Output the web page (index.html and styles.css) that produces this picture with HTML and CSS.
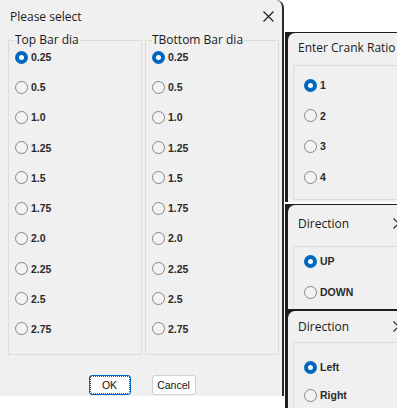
FILE: index.html
```html
<!DOCTYPE html>
<html lang="en">
  <head>
    <meta charset="UTF-8" />
    <title>Please select</title>
    <link rel="stylesheet" href="styles.css">
  </head>
  <body>
    <div class="dialog">
      <div class="titlebar">
        <span class="title">Please select</span>
        <svg class="close" width="11" height="11" viewBox="0 0 11 11">
          <path d="M0.5 0.5 L10.5 10.5 M10.5 0.5 L0.5 10.5" stroke="#1a1a1a" stroke-width="1.1" fill="none" />
        </svg>
      </div>

      <div class="groups">
        <fieldset class="group">
          <legend>Top Bar dia</legend>
          <label class="opt"><span class="dot on"></span>0.25</label>
          <label class="opt"><span class="dot"></span>0.5</label>
          <label class="opt"><span class="dot"></span>1.0</label>
          <label class="opt"><span class="dot"></span>1.25</label>
          <label class="opt"><span class="dot"></span>1.5</label>
          <label class="opt"><span class="dot"></span>1.75</label>
          <label class="opt"><span class="dot"></span>2.0</label>
          <label class="opt"><span class="dot"></span>2.25</label>
          <label class="opt"><span class="dot"></span>2.5</label>
          <label class="opt"><span class="dot"></span>2.75</label>
        </fieldset>
        <fieldset class="group">
          <legend>TBottom Bar dia</legend>
          <label class="opt"><span class="dot on"></span>0.25</label>
          <label class="opt"><span class="dot"></span>0.5</label>
          <label class="opt"><span class="dot"></span>1.0</label>
          <label class="opt"><span class="dot"></span>1.25</label>
          <label class="opt"><span class="dot"></span>1.5</label>
          <label class="opt"><span class="dot"></span>1.75</label>
          <label class="opt"><span class="dot"></span>2.0</label>
          <label class="opt"><span class="dot"></span>2.25</label>
          <label class="opt"><span class="dot"></span>2.5</label>
          <label class="opt"><span class="dot"></span>2.75</label>
        </fieldset>
      </div>

      <div class="buttons">
        <button class="btn btn-ok"><span>OK</span></button>
        <button class="btn btn-cancel">Cancel</button>
      </div>
    </div>

    <div class="side">
      <!-- Fenêtre ratio -->
      <div class="win win-crank">
        <div class="win-inner">
          <div class="win-title">Enter Crank Ratio</div>
          <div class="box box-crank">
            <label class="opt"><span class="dot on"></span>1</label>
            <label class="opt"><span class="dot"></span>2</label>
            <label class="opt"><span class="dot"></span>3</label>
            <label class="opt"><span class="dot"></span>4</label>
          </div>
        </div>
      </div>

      <!-- Direction haut / bas -->
      <div class="win win-dir1">
        <div class="win-inner">
          <div class="win-title">
            <span>Direction</span>
            <svg width="11" height="11" viewBox="0 0 11 11">
              <path d="M0.5 0.5 L10.5 10.5 M10.5 0.5 L0.5 10.5" stroke="#1a1a1a" stroke-width="1.1" fill="none" />
            </svg>
          </div>
          <div class="box box-dir1">
            <label class="opt"><span class="dot on"></span>UP</label>
            <label class="opt"><span class="dot"></span>DOWN</label>
          </div>
        </div>
      </div>

      <!-- Direction gauche / droite -->
      <div class="win win-dir2">
        <div class="win-inner">
          <div class="win-title">
            <span>Direction</span>
            <svg width="11" height="11" viewBox="0 0 11 11">
              <path d="M0.5 0.5 L10.5 10.5 M10.5 0.5 L0.5 10.5" stroke="#1a1a1a" stroke-width="1.1" fill="none" />
            </svg>
          </div>
          <div class="box box-dir2">
            <label class="opt"><span class="dot on"></span>Left</label>
            <label class="opt"><span class="dot"></span>Right</label>
          </div>
        </div>
      </div>
    </div>
  </body>
</html>
```

FILE: styles.css
```css
:root {
  --face: #f0f0f0;
  --line: #dcdcdc;
  --accent: #0067c0;
  --frame: #1e1e1e;
  --text: #1a1a1a;
}

* {
  box-sizing: border-box;
  margin: 0;
  padding: 0;
}

body {
  width: 397px;
  height: 408px;
  overflow: hidden;
  display: flex;
  align-items: flex-start;
  background: #fff;
  font-family: "Open Sans", "Noto Sans", sans-serif;
  color: var(--text);
}

/* Fenêtre principale */
.dialog {
  width: 284px;
  height: 396px;
  flex-shrink: 0;
  background: var(--face);
  border-right: 2px solid #2b2b2b;
  border-top-right-radius: 8px;
}

.titlebar {
  height: 32px;
  display: flex;
  align-items: center;
  justify-content: space-between;
  padding: 0 8px 0 10px;
}

.title {
  font-size: 12px;
}

.groups {
  display: grid;
  grid-template-columns: 134px 134px;
  column-gap: 3px;
  padding-left: 8px;
}

.group {
  border: 1px solid var(--line);
  padding: 0 6px 16px 6px;
  display: flex;
  flex-direction: column;
  gap: 12.22px;
}

.group legend {
  font-size: 12px;
  line-height: 16px;
  padding: 0 1px 0 0;
}

.opt {
  height: 18px;
  display: flex;
  align-items: center;
  gap: 3px;
  font-family: "Liberation Sans", Arial, sans-serif;
  font-size: 10.5px;
  font-weight: 700;
  color: #2a2a2a;
}

.dot {
  width: 13px;
  height: 13px;
  border-radius: 50%;
  border: 1px solid #858585;
  background: #f3f3f3;
  flex-shrink: 0;
}

.dot.on {
  border: 4px solid var(--accent);
  background: #fff;
}

.buttons {
  display: flex;
  justify-content: center;
  gap: 21px;
  margin-top: 20px;
  padding-left: 2px;
}

.btn {
  height: 20px;
  border-radius: 3px;
  background: #fdfdfd;
  font-family: "Liberation Sans", Arial, sans-serif;
  font-size: 10.5px;
  color: #111;
}

.btn-ok {
  width: 42px;
  border: 1px solid var(--accent);
  padding: 1px;
}

.btn-ok span {
  display: flex;
  align-items: center;
  justify-content: center;
  height: 100%;
  outline: 1px dotted #555;
}

.btn-cancel {
  width: 44px;
  border: 1px solid #d0d0d0;
}

/* Petites fenêtres à droite */
.side {
  width: 112px;
  height: 408px;
  margin-left: 1px;
  padding-top: 32px;
  overflow: hidden;
  display: flex;
  flex-direction: column;
}

.win {
  background: var(--frame);
  padding: 1px 0 0 3px;
  flex-shrink: 0;
}

.win-inner {
  width: 126px;
  height: 100%;
  background: var(--face);
  border-top-left-radius: 7px;
  padding-left: 5px;
}

.win-title {
  display: flex;
  align-items: center;
  justify-content: space-between;
  padding: 0 10px 0 5px;
  font-size: 12px;
}

.box {
  border: 1px solid var(--line);
  padding-left: 10px;
  display: flex;
  flex-direction: column;
}

.win-crank {
  margin-bottom: 2px;
}

.win-crank .win-inner {
  padding-bottom: 2px;
}

.win-crank .win-title {
  height: 32px;
  padding-bottom: 4px;
}

.box-crank {
  padding-top: 10px;
  padding-bottom: 13px;
  gap: 12.7px;
}

.win-dir1 {
  height: 105px;
  overflow: hidden;
}

.win-dir1 .win-title {
  height: 41px;
  padding-bottom: 5px;
}

.box-dir1 {
  padding-top: 5px;
  padding-bottom: 20px;
  gap: 13px;
}

.win-dir2 {
  height: 100px;
  overflow: hidden;
  padding-top: 2px;
}

.win-dir2 .win-title {
  height: 31px;
}

.box-dir2 {
  padding-top: 15px;
  padding-bottom: 20px;
  gap: 10px;
}
```
